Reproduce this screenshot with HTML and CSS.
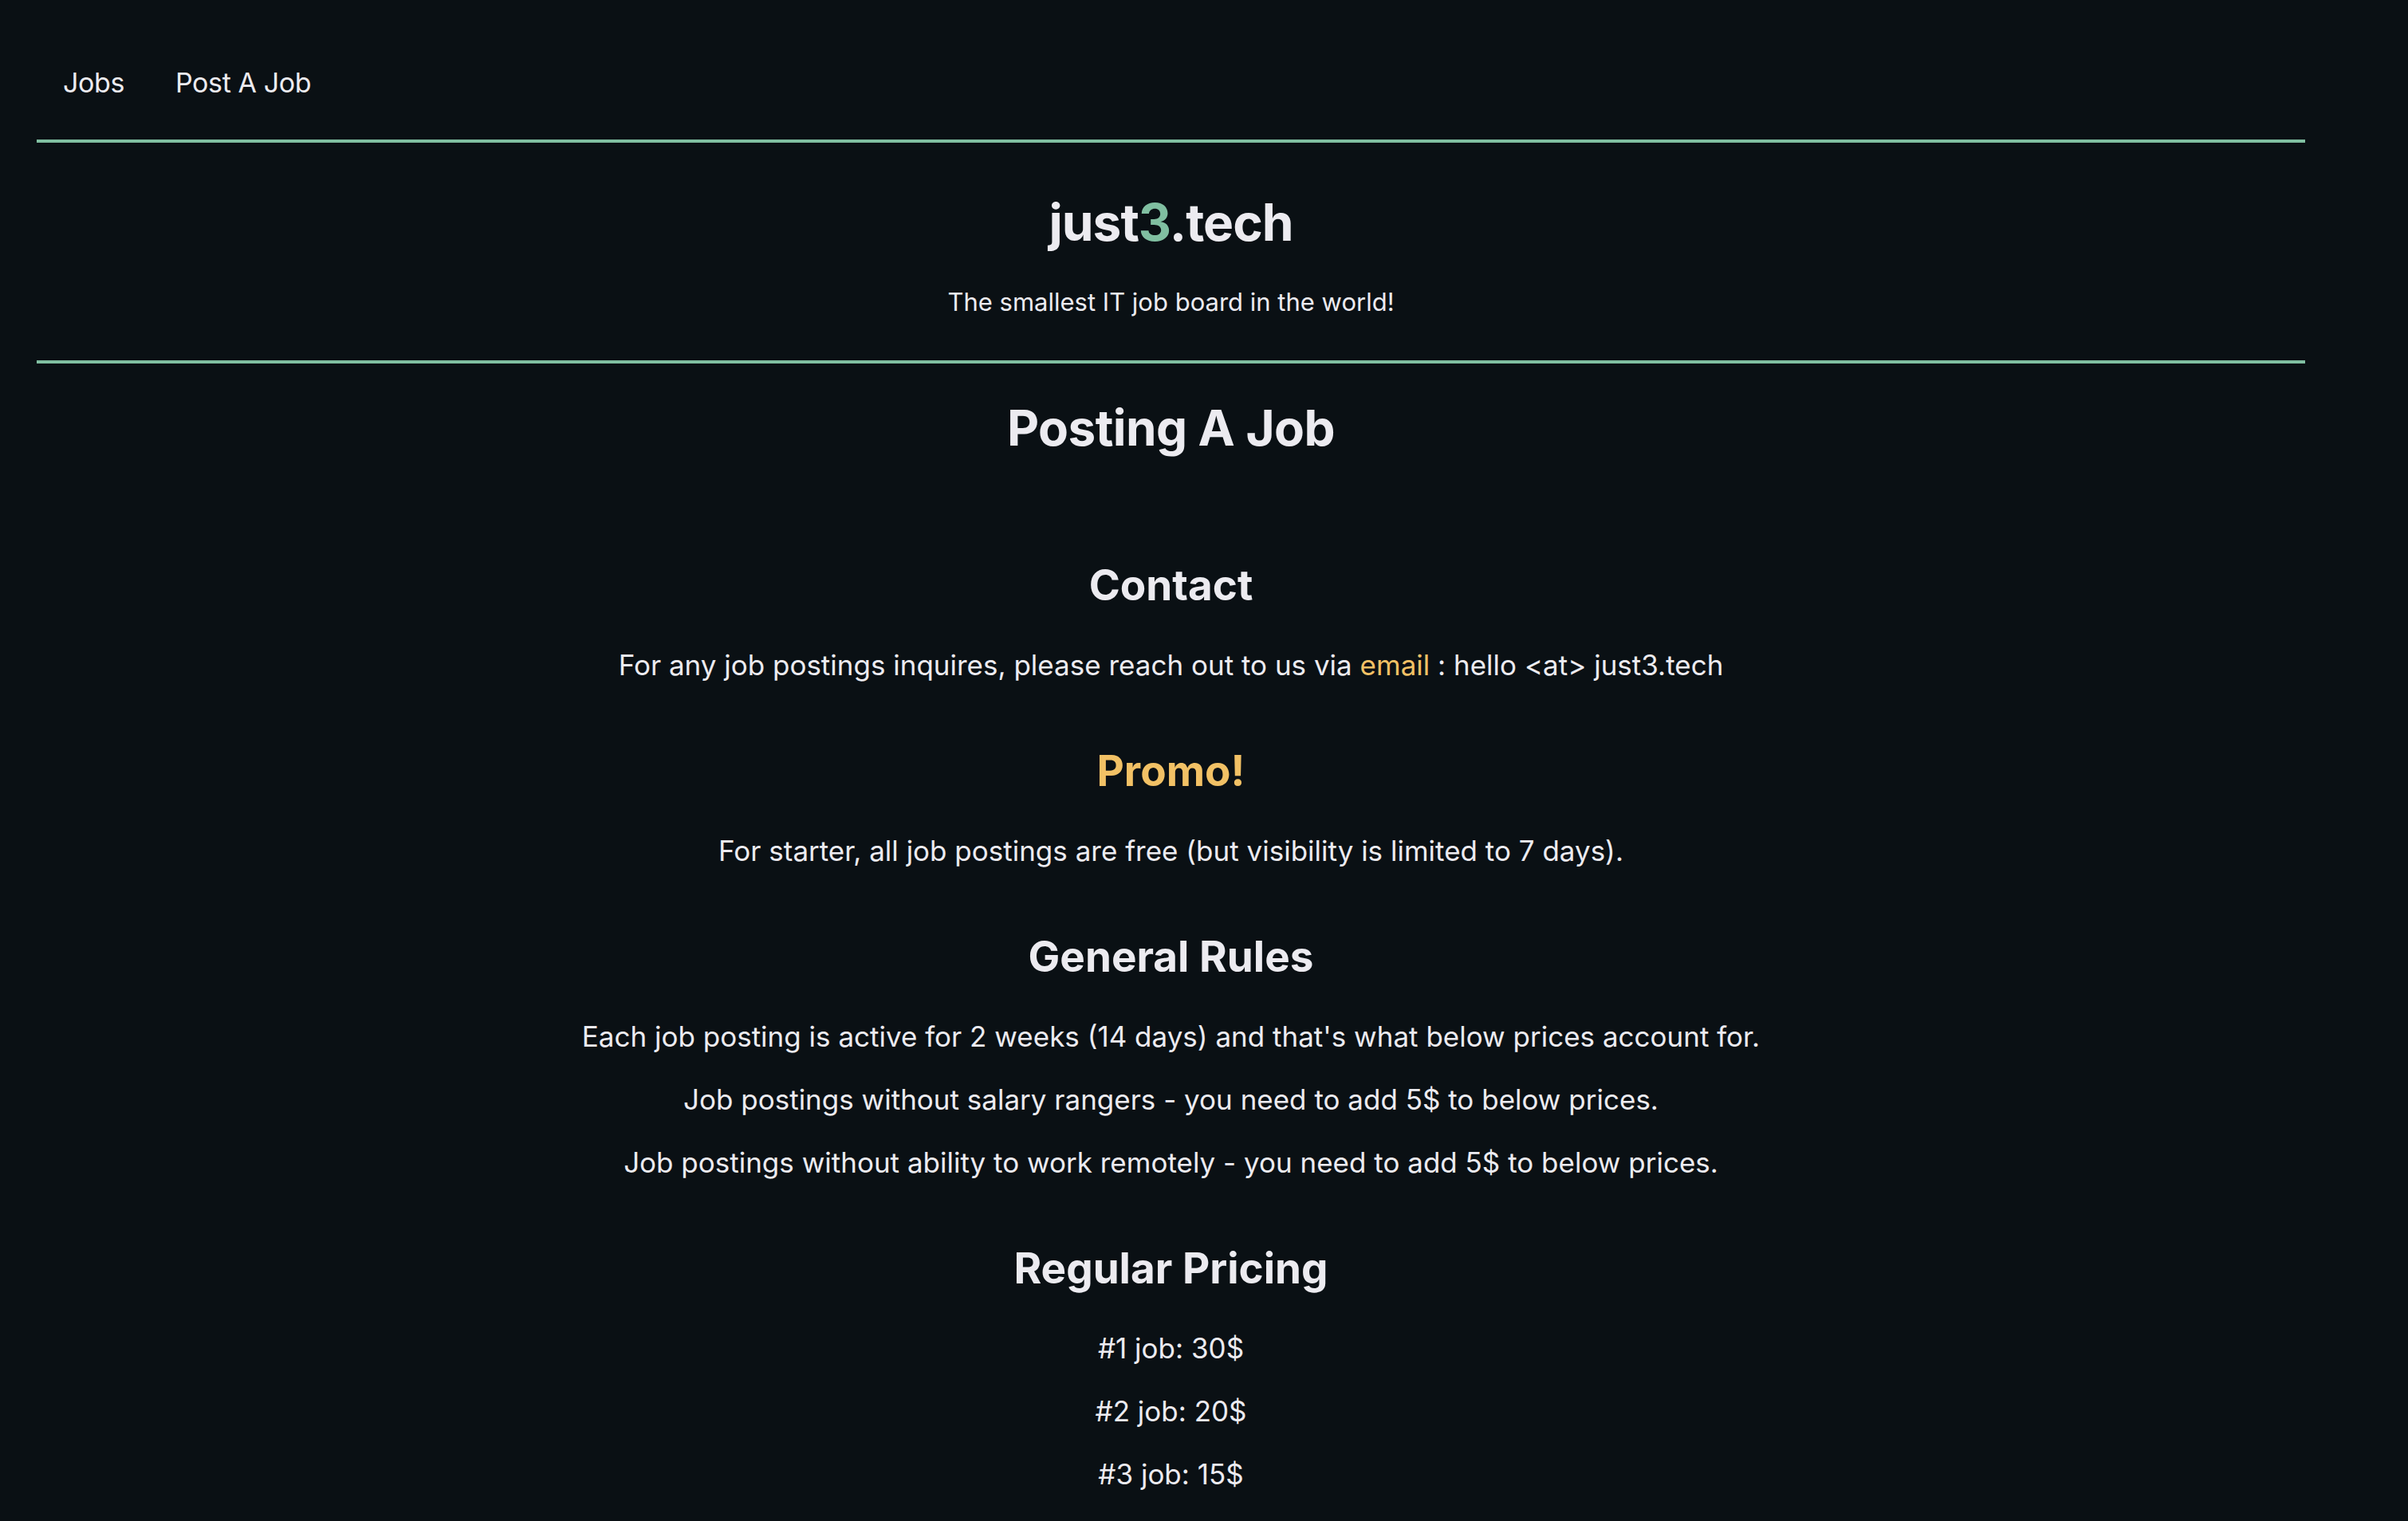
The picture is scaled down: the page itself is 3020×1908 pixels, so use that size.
FILE: index.html
```html
<!DOCTYPE html>
<html lang="en">
<head>
    <meta charset="UTF-8">
    <title>Posting A Job - just3.tech</title>
    <link rel="stylesheet" href="styles.css">
</head>
<body>
<div id="page">
    <ul id="nav">
        <li><a href="#">Jobs</a></li>
        <li><a href="#">Post A Job</a></li>
    </ul>
    <div id="header">
        <div class="logo">just<span class="three">3</span>.tech</div>
        <p class="tagline">The smallest IT job board in the world!</p>
    </div>
    <div id="content">
        <h1>Posting A Job</h1>

        <h2>Contact</h2>
        <p>For any job postings inquires, please reach out to us via <a class="mail" href="#">email</a> : hello &lt;at&gt; just3.tech</p>

        <h2 class="promo">Promo!</h2>
        <p>For starter, all job postings are free (but visibility is limited to 7 days).</p>

        <h2>General Rules</h2>
        <p>Each job posting is active for 2 weeks (14 days) and that's what below prices account for.</p>
        <p>Job postings without salary rangers - you need to add 5$ to below prices.</p>
        <p>Job postings without ability to work remotely - you need to add 5$ to below prices.</p>

        <h2>Regular Pricing</h2>
        <p>#1 job: 30$</p>
        <p>#2 job: 20$</p>
        <p>#3 job: 15$</p>
    </div>
</div>
</body>
</html>
```

FILE: styles.css
```css
*{
    margin: 0;
    padding: 0;
}
ul,ol{
    list-style: none;
}
a{
    text-decoration: none;
    color: inherit;
}
body{
    background-color: #0a1014;
    color: #ecebf0;
    font-family: Inter, "Noto Sans", sans-serif;
}
#page{
    width: 2845px;
    margin: 0 0 0 46px;
}
#nav{
    display: flex;
    gap: 64px;
    padding: 82px 0 49px 33px;
    border-bottom: 4px solid #80bfa1;
}
#nav li{
    font-size: 34px;
    line-height: 44px;
    letter-spacing: -0.4px;
}
#header{
    text-align: center;
    padding: 62px 0 54px;
    border-bottom: 4px solid #80bfa1;
}
#header .logo{
    font-size: 64px;
    font-weight: 700;
    line-height: 76px;
    letter-spacing: -1px;
}
#header .three{
    color: #80bfa1;
}
#header .tagline{
    font-size: 31px;
    line-height: 38px;
    margin-top: 43px;
}
#content{
    text-align: center;
    padding-top: 44px;
}
#content h1{
    font-size: 62px;
    line-height: 74px;
    font-weight: 700;
    letter-spacing: -0.6px;
    margin-bottom: 130px;
}
#content h2{
    font-size: 53px;
    line-height: 60px;
    font-weight: 700;
    margin: 81px 0 48px;
}
#content h1 + h2{
    margin-top: 0;
}
#content p{
    font-size: 35px;
    line-height: 44px;
    margin: 35px 0;
}
#content h2 + p{
    margin-top: 0;
}
#content .promo,
#content .mail{
    color: #f2c165;
}
```
